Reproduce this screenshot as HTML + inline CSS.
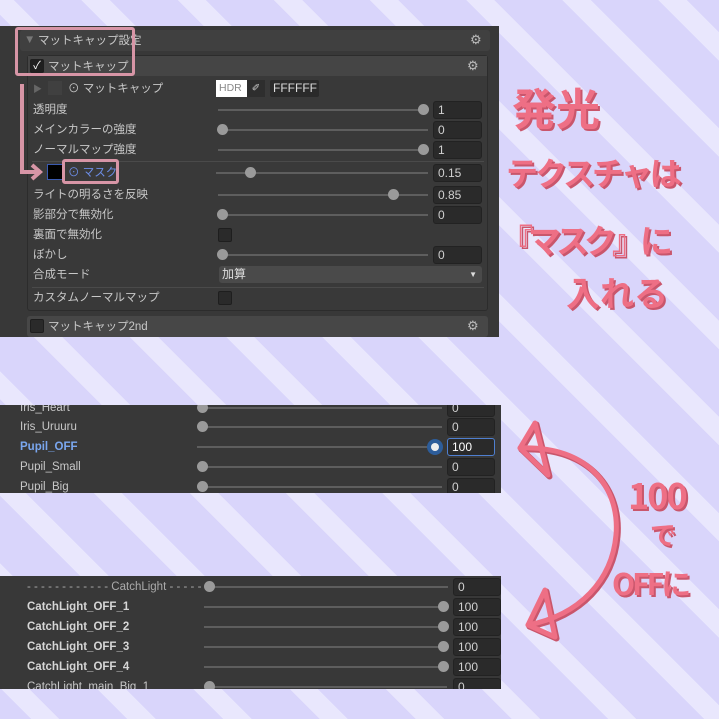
<!DOCTYPE html>
<html><head><meta charset="utf-8"><style>
*{margin:0;padding:0;box-sizing:border-box}
body{width:719px;height:719px;overflow:hidden;position:relative;font-family:"Liberation Sans","Noto Sans CJK JP",sans-serif;
background:repeating-linear-gradient(45deg,#d9d5fb 0 22px,#e9e7fd 22px 42px,#d9d5fb 42px 68px);}
.a{position:absolute}
.p{background:#383838}
.t{position:absolute;color:#c8c8c8;font-size:11.5px;line-height:14px;white-space:nowrap}
.tr{position:absolute;height:2px;background:#5e5e5e}
.th{position:absolute;width:11px;height:11px;border-radius:50%;background:#9a9a9a}
.v{position:absolute;height:18px;background:#2a2a2a;border:1px solid #222;border-radius:3px;color:#d0d0d0;font-size:12px;line-height:16px;padding-left:4px}
.cb{position:absolute;width:14px;height:14px;background:#2a2a2a;border:1px solid #1e1e1e;border-radius:2px}
.hw{position:absolute;color:#ee6f85;font-family:"Noto Sans CJK JP",sans-serif;font-weight:700;text-shadow:2px 2px 0 #c9566c;white-space:nowrap}
.b{font-weight:bold;color:#d6d6d6}
</style></head><body>

<div class="a p" style="left:0;top:26px;width:499px;height:311px"></div>
<div class="a" style="left:20px;top:30px;width:470px;height:21px;background:#404040;border-radius:3px"></div>
<div class="t" style="left:24px;top:33px;color:#777">▼</div>
<div class="t" style="left:38px;top:34px">マットキャップ設定</div>
<div class="t" style="left:470px;top:33px;color:#bbb;font-size:13px">⚙</div>
<div class="a" style="left:27px;top:55px;width:461px;height:256px;background:#393939;border:1px solid #2c2c2c;border-radius:3px"></div>
<div class="a" style="left:28px;top:56px;width:459px;height:20px;background:#454545"></div>
<div class="cb" style="left:30px;top:59px;background:#1f1f1f;color:#fff;font-size:11px;line-height:12px;text-align:center">✓</div>
<div class="t" style="left:48px;top:60px">マットキャップ</div>
<div class="t" style="left:467px;top:59px;color:#bbb;font-size:13px">⚙</div>

<div class="t" style="left:33px;top:82px;color:#666;font-size:9px">▶</div>
<div class="a" style="left:48px;top:81px;width:14px;height:14px;background:#404040"></div>
<div class="t" style="left:68px;top:82px">⊙ マットキャップ</div>
<div class="a" style="left:216px;top:80px;width:31px;height:17px;background:#fff;color:#888;font-size:10.5px;line-height:17px;padding-left:3px">HDR</div>
<div class="a" style="left:247px;top:80px;width:18px;height:17px;background:#2e2e2e;color:#ccc;font-size:10px;line-height:17px;text-align:center">✐</div>
<div class="a" style="left:270px;top:80px;width:49px;height:17px;background:#2a2a2a;border-radius:2px;color:#ddd;font-size:12px;line-height:17px;padding-left:3px">FFFFFF</div>

<div class="t" style="left:33px;top:103px">透明度</div>
<div class="tr" style="left:218px;top:109px;width:210px"></div><div class="th" style="left:418px;top:104px"></div>
<div class="v" style="left:433px;top:101px;width:49px">1</div>
<div class="t" style="left:33px;top:123px">メインカラーの強度</div>
<div class="tr" style="left:218px;top:129px;width:210px"></div><div class="th" style="left:217px;top:124px"></div>
<div class="v" style="left:433px;top:121px;width:49px">0</div>
<div class="t" style="left:33px;top:143px">ノーマルマップ強度</div>
<div class="tr" style="left:218px;top:149px;width:210px"></div><div class="th" style="left:418px;top:144px"></div>
<div class="v" style="left:433px;top:141px;width:49px">1</div>
<div class="a" style="left:32px;top:161px;width:452px;height:1px;background:#4a4a4a"></div>
<div class="a" style="left:47px;top:164px;width:16px;height:16px;background:#000;border:1px solid #3a5ab0"></div>
<div class="t" style="left:68px;top:166px;color:#6d8ee8">⊙ マスク</div>
<div class="tr" style="left:216px;top:172px;width:212px"></div><div class="th" style="left:245px;top:167px"></div>
<div class="v" style="left:433px;top:164px;width:49px">0.15</div>
<div class="t" style="left:33px;top:188px">ライトの明るさを反映</div>
<div class="tr" style="left:218px;top:194px;width:210px"></div><div class="th" style="left:388px;top:189px"></div>
<div class="v" style="left:433px;top:186px;width:49px">0.85</div>
<div class="t" style="left:33px;top:208px">影部分で無効化</div>
<div class="tr" style="left:218px;top:214px;width:210px"></div><div class="th" style="left:217px;top:209px"></div>
<div class="v" style="left:433px;top:206px;width:49px">0</div>
<div class="t" style="left:33px;top:228px">裏面で無効化</div>
<div class="cb" style="left:218px;top:228px"></div>
<div class="t" style="left:33px;top:248px">ぼかし</div>
<div class="tr" style="left:218px;top:254px;width:210px"></div><div class="th" style="left:217px;top:249px"></div>
<div class="v" style="left:433px;top:246px;width:49px">0</div>
<div class="t" style="left:33px;top:268px">合成モード</div>
<div class="a" style="left:219px;top:266px;width:263px;height:17px;background:#4a4a4a;border-radius:3px;color:#ddd;font-size:12px;line-height:17px;padding-left:3px">加算<span style="position:absolute;right:5px;top:0;font-size:8px">▼</span></div>
<div class="a" style="left:32px;top:287px;width:452px;height:1px;background:#4a4a4a"></div>
<div class="t" style="left:33px;top:291px">カスタムノーマルマップ</div>
<div class="cb" style="left:218px;top:291px"></div>
<div class="a" style="left:27px;top:316px;width:461px;height:21px;background:#474747;border-radius:3px"></div>
<div class="cb" style="left:30px;top:319px"></div>
<div class="t" style="left:48px;top:320px">マットキャップ2nd</div>
<div class="t" style="left:467px;top:319px;color:#bbb;font-size:13px">⚙</div>

<div class="a" style="left:15px;top:27px;width:120px;height:49px;border:3px solid #d795a6;border-radius:3px"></div>
<div class="a" style="left:62px;top:159px;width:57px;height:25px;border:3px solid #d795a6;border-radius:3px"></div>
<svg class="a" style="left:0;top:0" width="719" height="719">
<path d="M22 84 V172 H38" stroke="#d795a6" stroke-width="4" fill="none"/>
<path d="M32 165 L40 172 L32 179" stroke="#d795a6" stroke-width="4" fill="none"/>
<g stroke="#c9566c" stroke-width="6" fill="none" stroke-linecap="round" stroke-linejoin="round" transform="translate(1.5,1.5)">
<path d="M520 448 C590 445 620 490 616 535 C612 580 580 615 528 625"/>
<path d="M535 423 L520 448 L548 475 Z"/><path d="M528 625 L545 590 L555 637 Z"/></g>
<g stroke="#ee6f85" stroke-width="5" fill="none" stroke-linecap="round" stroke-linejoin="round">
<path d="M520 448 C590 445 620 490 616 535 C612 580 580 615 528 625"/>
<path d="M535 423 L520 448 L548 475 Z"/><path d="M528 625 L545 590 L555 637 Z"/></g>
</svg>

<div class="hw" style="left:512px;top:76px;font-size:44px;line-height:60px">発光</div>
<div class="hw" style="left:506px;top:150px;font-size:32px;line-height:44px;letter-spacing:-3px">テクスチャは</div>
<div class="hw" style="left:500px;top:214px;font-size:33px;line-height:50px;letter-spacing:-5px">『マスク』に</div>
<div class="hw" style="left:566px;top:270px;font-size:34px;line-height:44px">入れる</div>
<div class="hw" style="left:628px;top:472px;font-size:36px;line-height:44px;letter-spacing:-2px">100</div>
<div class="hw" style="left:650px;top:518px;font-size:26px;line-height:34px">で</div>
<div class="hw" style="left:612px;top:562px;font-size:30px;line-height:40px;letter-spacing:-3px">OFFに</div>

<div class="a p" style="left:0;top:405px;width:501px;height:88px;overflow:hidden">
<div class="t" style="left:20px;top:-4px">Iris_Heart</div>
<div class="tr" style="left:198px;top:2px;width:244px"></div><div class="th" style="left:197px;top:-3px"></div>
<div class="v" style="left:447px;top:-6px;width:48px">0</div>
<div class="t" style="left:20px;top:15px">Iris_Uruuru</div>
<div class="tr" style="left:198px;top:21px;width:244px"></div><div class="th" style="left:197px;top:16px"></div>
<div class="v" style="left:447px;top:13px;width:48px">0</div>
<div class="t" style="left:20px;top:35px;color:#7aa7f0;font-weight:bold">Pupil_OFF</div>
<div class="tr" style="left:197px;top:41px;width:245px"></div>
<div class="a" style="left:427px;top:34px;width:16px;height:16px;border-radius:50%;background:#2d5d9a"></div><div class="a" style="left:431px;top:38px;width:8px;height:8px;border-radius:50%;background:#eee"></div>
<div class="v" style="left:447px;top:33px;width:48px;border-color:#4f7fd0;color:#fff">100</div>
<div class="t" style="left:20px;top:55px">Pupil_Small</div>
<div class="tr" style="left:198px;top:61px;width:244px"></div><div class="th" style="left:197px;top:56px"></div>
<div class="v" style="left:447px;top:53px;width:48px">0</div>
<div class="t" style="left:20px;top:75px">Pupil_Big</div>
<div class="tr" style="left:198px;top:81px;width:244px"></div><div class="th" style="left:197px;top:76px"></div>
<div class="v" style="left:447px;top:73px;width:48px">0</div>
</div>

<div class="a p" style="left:0;top:576px;width:501px;height:113px;overflow:hidden">
<div class="t" style="left:27px;top:4px;color:#aaa">- - - - - - - - - - - - CatchLight - - - - - -</div>
<div class="tr" style="left:208px;top:10px;width:240px"></div><div class="th" style="left:204px;top:5px"></div>
<div class="v" style="left:453px;top:2px;width:48px">0</div>
<div class="t b" style="left:27px;top:24px">CatchLight_OFF_1</div>
<div class="tr" style="left:204px;top:30px;width:243px"></div><div class="th" style="left:438px;top:25px"></div>
<div class="v" style="left:453px;top:22px;width:48px">100</div>
<div class="t b" style="left:27px;top:44px">CatchLight_OFF_2</div>
<div class="tr" style="left:204px;top:50px;width:243px"></div><div class="th" style="left:438px;top:45px"></div>
<div class="v" style="left:453px;top:42px;width:48px">100</div>
<div class="t b" style="left:27px;top:64px">CatchLight_OFF_3</div>
<div class="tr" style="left:204px;top:70px;width:243px"></div><div class="th" style="left:438px;top:65px"></div>
<div class="v" style="left:453px;top:62px;width:48px">100</div>
<div class="t b" style="left:27px;top:84px">CatchLight_OFF_4</div>
<div class="tr" style="left:204px;top:90px;width:243px"></div><div class="th" style="left:438px;top:85px"></div>
<div class="v" style="left:453px;top:82px;width:48px">100</div>
<div class="t" style="left:27px;top:104px">CatchLight_main_Big_1</div>
<div class="tr" style="left:204px;top:110px;width:243px"></div><div class="th" style="left:204px;top:105px"></div>
<div class="v" style="left:453px;top:102px;width:48px">0</div>
</div>
</body></html>
